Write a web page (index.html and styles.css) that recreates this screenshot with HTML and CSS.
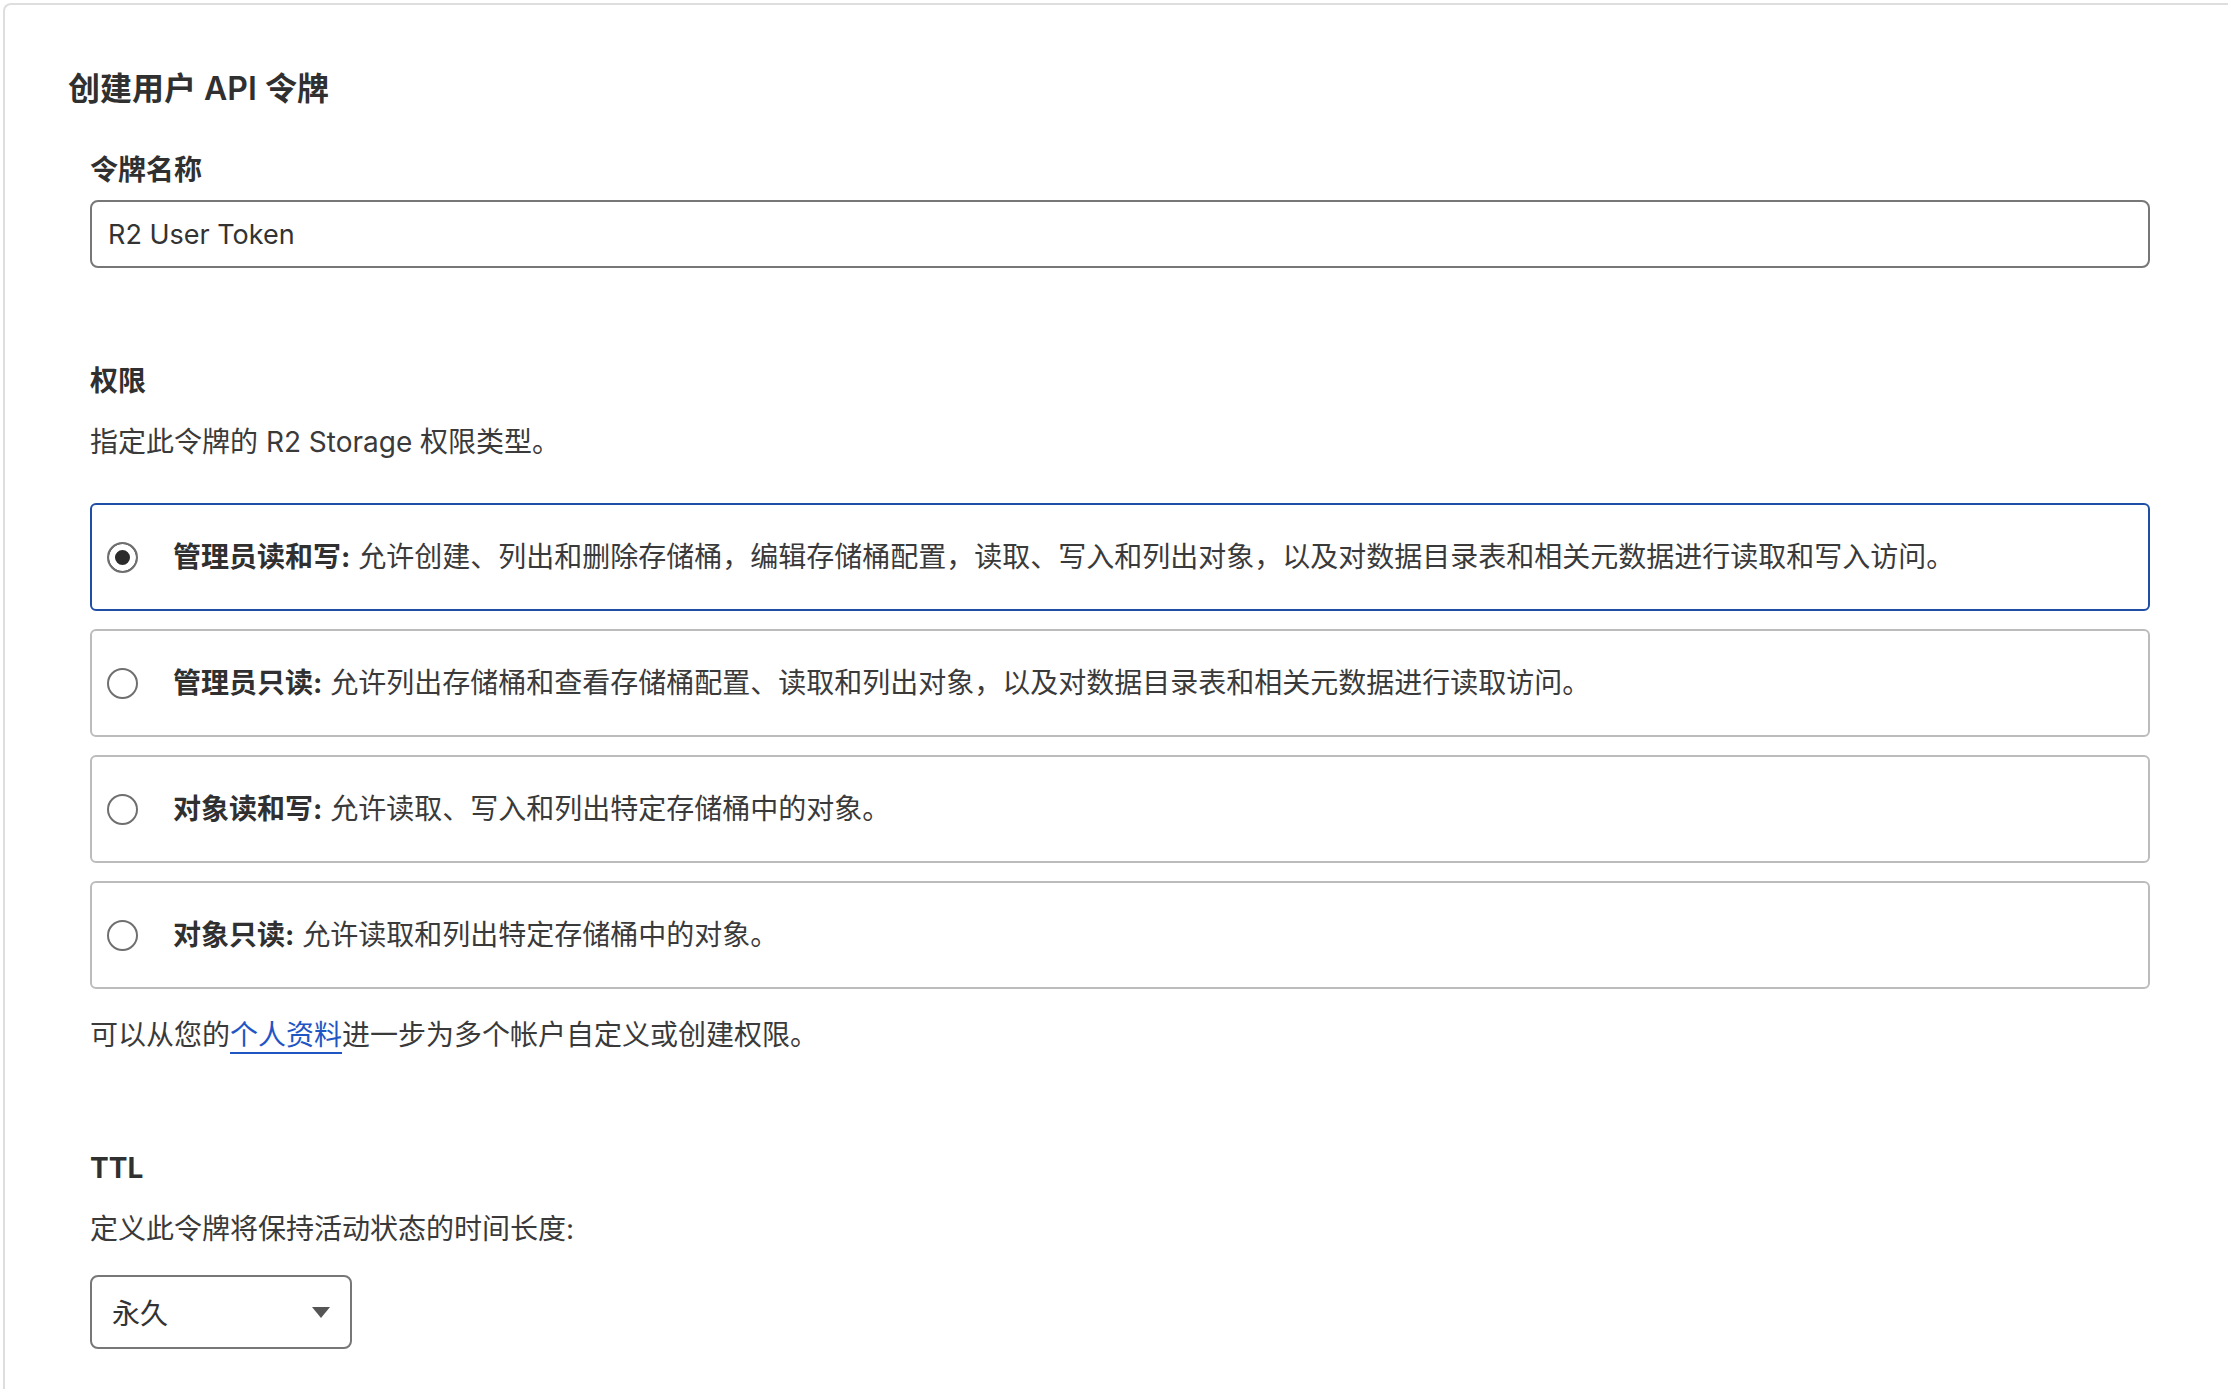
FILE: index.html
```html
<!DOCTYPE html>
<html>
<head>
    <title>创建用户 API 令牌</title>
    <link rel="stylesheet" href="styles.css">
</head>
<body>

    <div class="card">
        <h1 class="card-title">创建用户 API 令牌</h1>

        <div class="form">
            <label class="field-label" for="tokenName">令牌名称</label>
            <input type="text" id="tokenName" class="text-input" value="R2 User Token">

            <div class="field-label perms-label">权限</div>
            <p class="hint">指定此令牌的 R2 Storage 权限类型。</p>

            <div class="option-list">
                <label class="option selected">
                    <input type="radio" name="perm" checked>
                    <span><b>管理员读和写:</b> 允许创建、列出和删除存储桶，编辑存储桶配置，读取、写入和列出对象，以及对数据目录表和相关元数据进行读取和写入访问。</span>
                </label>
                <label class="option">
                    <input type="radio" name="perm">
                    <span><b>管理员只读:</b> 允许列出存储桶和查看存储桶配置、读取和列出对象，以及对数据目录表和相关元数据进行读取访问。</span>
                </label>
                <label class="option">
                    <input type="radio" name="perm">
                    <span><b>对象读和写:</b> 允许读取、写入和列出特定存储桶中的对象。</span>
                </label>
                <label class="option">
                    <input type="radio" name="perm">
                    <span><b>对象只读:</b> 允许读取和列出特定存储桶中的对象。</span>
                </label>
            </div>

            <p class="note">可以从您的<a href="#">个人资料</a>进一步为多个帐户自定义或创建权限。</p>

            <div class="field-label ttl-label">TTL</div>
            <p class="hint">定义此令牌将保持活动状态的时间长度:</p>

            <div class="select-box">
                <span>永久</span>
                <svg width="18" height="11" viewBox="0 0 18 11"><path d="M0 0 L18 0 L9 11 Z" fill="#555"/></svg>
            </div>
        </div>
    </div>

    <script>
        document.querySelectorAll('.option input').forEach(radio => {
            radio.addEventListener('change', () => {
                document.querySelectorAll('.option').forEach(o => o.classList.remove('selected'));
                radio.closest('.option').classList.add('selected');
            });
        });
    </script>
</body>
</html>
```

FILE: styles.css
```css
body {
    font-family: Inter, "Noto Sans CJK SC", sans-serif;
    margin: 0;
    padding: 0;
    background-color: white;
    color: #3a3a3a;
    overflow: hidden;
}

.card {
    margin: 3px 0 0 3px;
    padding: 62px 0 40px 63px;
    border-top: 2px solid #dedede;
    border-left: 2px solid #dedede;
    border-top-left-radius: 8px;
}

.card-title {
    margin: 0;
    font-size: 32px;
    line-height: 44px;
    font-weight: 600;
    color: #303030;
}

.form {
    display: flex;
    flex-direction: column;
    align-items: flex-start;
    padding: 0 78px 0 22px;
}

.field-label {
    display: block;
    margin-top: 39px;
    font-size: 28px;
    line-height: 40px;
    font-weight: 700;
    color: #303030;
}

.text-input {
    box-sizing: border-box;
    width: 100%;
    height: 68px;
    margin-top: 10px;
    padding: 0 16px;
    font-family: inherit;
    font-size: 27px;
    color: #333;
    border: 2px solid #777;
    border-radius: 8px;
    outline: none;
}

.perms-label {
    margin-top: 93px;
}

.ttl-label {
    margin-top: 93px;
}

.hint {
    margin: 21px 0 0;
    font-size: 28px;
    line-height: 40px;
}

.option-list {
    width: 100%;
    margin-top: 41px;
    display: flex;
    flex-direction: column;
    gap: 18px;
}

.option {
    box-sizing: border-box;
    height: 108px;
    display: flex;
    align-items: center;
    gap: 35px;
    padding: 0 15px;
    border: 2px solid #bcbcbc;
    border-radius: 6px;
    font-size: 28px;
    line-height: 40px;
    cursor: pointer;
}

.option.selected {
    border-color: #1f4ea6;
}

.option b {
    color: #303030;
}

.option input {
    appearance: none;
    -webkit-appearance: none;
    flex: none;
    width: 31px;
    height: 31px;
    margin: 0;
    border: 2px solid #6f6f6f;
    border-radius: 50%;
    background: white;
}

.option input:checked {
    background: #2b2b2b;
    box-shadow: inset 0 0 0 6px white;
}

.note {
    margin: 26px 0 0;
    font-size: 28px;
    line-height: 40px;
}

.note a {
    color: #1f56c4;
    text-decoration: underline;
    text-decoration-thickness: 2px;
    text-underline-offset: 7px;
}

.select-box {
    box-sizing: border-box;
    width: 262px;
    height: 74px;
    margin-top: 26px;
    display: flex;
    align-items: center;
    justify-content: space-between;
    padding: 0 20px 0 20px;
    border: 2px solid #777;
    border-radius: 8px;
    font-size: 28px;
    color: #333;
}
```
